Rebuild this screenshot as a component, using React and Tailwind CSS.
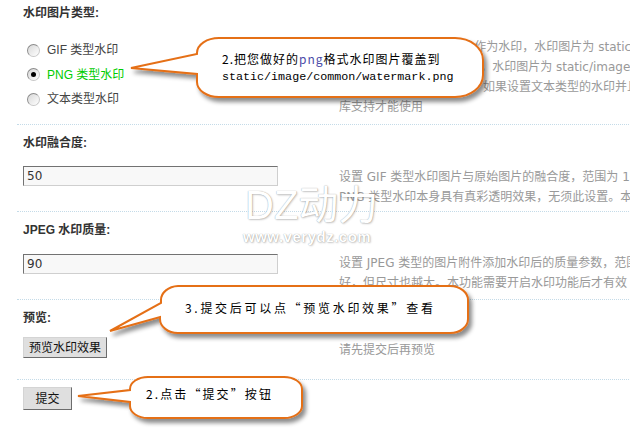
export default function App() {
  const radio = "w-[13px] h-[13px] rounded-full border border-[#8c8c8c] border-r-[#c8c8c8] border-b-[#c8c8c8] bg-gradient-to-br from-[#d8d8d8] to-white flex items-center justify-center";
  const input = "w-[255px] h-[20px] border border-t-[#727272] border-l-[#727272] border-b-[#cfcfcf] border-r-[#cfcfcf] bg-[#f8f8f8] pl-[3px] text-[12px] leading-[18px] text-[#333] [font-family:'DejaVu_Sans',sans-serif] outline-none";
  const btn = "h-[21px] bg-[#dfdfdf] border border-t-[#d4d4d4] border-l-[#d4d4d4] border-b-[#6c6c6c] border-r-[#6c6c6c] text-[12px] leading-none text-[#111]";
  const desc = "pl-[6px] text-[#999] leading-[20px] whitespace-nowrap [font-family:'DejaVu_Sans','Noto_Sans_CJK_SC',sans-serif]";
  return (
    <div className="relative w-[630px] h-[430px] overflow-hidden bg-white text-[12px] text-[#333] [font-family:'Liberation_Sans','Noto_Sans_CJK_SC',sans-serif]">
      <div className="ml-[17px] w-[900px]">
        {/* 水印图片类型 */}
        <div className="h-[125px] border-b border-dotted border-[#c4dbe8] pl-[6px] pt-[5px]">
          <div className="h-[16px] leading-[16px] font-bold">水印图片类型:</div>
          <div className="flex items-start">
            <div className="w-[310px] pt-[17px]">
              <div className="flex items-center h-[24.5px]">
                <span className={"ml-[4px] mr-[7px] " + radio}></span>
                <span className="text-[#444]">GIF 类型水印</span>
              </div>
              <div className="flex items-center h-[24.5px]">
                <span className={"ml-[4px] mr-[7px] " + radio}>
                  <span className="w-[5px] h-[5px] rounded-full bg-black"></span>
                </span>
                <span className="text-[#00cc00]">PNG 类型水印</span>
              </div>
              <div className="flex items-center h-[24.5px]">
                <span className={"ml-[4px] mr-[7px] " + radio}></span>
                <span className="text-[#444]">文本类型水印</span>
              </div>
            </div>
            <div className={desc + " pt-[16px] leading-[20.5px]"}>
              <div>如果设置 GIF 类型的图片作为水印，水印图片为 static/image/common/watermark.gif，</div>
              <div>如果设置 PNG 类型的图片，水印图片为 static/image/common/watermark.png，</div>
              <div>替换文件以实现不同效果。如果设置文本类型的水印并且使用 TrueType 字体，需要 FreeType</div>
              <div>库支持才能使用</div>
            </div>
          </div>
        </div>
        {/* 水印融合度 */}
        <div className="h-[87px] border-b border-dotted border-[#c4dbe8] pl-[6px] pt-[10px]">
          <div className="h-[16px] leading-[16px] font-bold">水印融合度:</div>
          <div className="flex items-start">
            <div className="w-[310px] pt-[15px]">
              <input className={input} defaultValue="50" />
            </div>
            <div className={desc + " pt-[16px]"}>
              <div>设置 GIF 类型水印图片与原始图片的融合度，范围为 1～100 的整数，数值越大水印图片透明度越低。</div>
              <div>PNG 类型水印本身具有真彩透明效果，无须此设置。本功能需要开启水印功能后才有效</div>
            </div>
          </div>
        </div>
        {/* JPEG 水印质量 */}
        <div className="h-[88px] border-b border-dotted border-[#c4dbe8] pl-[6px] pt-[10px]">
          <div className="h-[16px] leading-[16px] font-bold">JPEG 水印质量:</div>
          <div className="flex items-start">
            <div className="w-[310px] pt-[16px]">
              <input className={input} defaultValue="90" />
            </div>
            <div className={desc + " pt-[15px]"}>
              <div>设置 JPEG 类型的图片附件添加水印后的质量参数，范围为 0～100 的整数，数值越大结果图片效果越</div>
              <div>好，但尺寸也越大。本功能需要开启水印功能后才有效</div>
            </div>
          </div>
        </div>
        {/* 预览 */}
        <div className="h-[80px] border-b border-dotted border-[#c4dbe8] pl-[6px] pt-[10px]">
          <div className="h-[16px] leading-[16px] font-bold">预览:</div>
          <div className="flex items-start">
            <div className="w-[310px] pt-[11px]">
              <button className={btn + " w-[84px]"}>预览水印效果</button>
            </div>
            <div className={desc + " pt-[14px]"}>
              <div>请先提交后再预览</div>
            </div>
          </div>
        </div>
        {/* 提交 */}
        <div className="pl-[6px] pt-[7px]">
          <button className={btn + " w-[49px] h-[23px]"}>提交</button>
        </div>
      </div>

      {/* watermark */}
      <div className="absolute left-[245px] top-[185px] text-white [text-shadow:0_0_1px_rgba(0,0,0,0.4),1px_1px_2px_rgba(0,0,0,0.2)]">
        <div className="text-[40px] leading-none h-[44px]">DZ动力</div>
        <div className="-ml-[2px] text-[15px] leading-[16px] font-bold tracking-[0.5px] [font-family:'Liberation_Sans',sans-serif]">www.verydz.com</div>
      </div>

      {/* callouts */}
      <svg className="absolute left-0 top-0" width="630" height="430" viewBox="0 0 630 430">
        <defs>
          <filter id="sh" x="-20%" y="-30%" width="140%" height="170%">
            <feDropShadow dx="3" dy="4" stdDeviation="2" floodColor="#000" floodOpacity="0.45" />
          </filter>
        </defs>
        <g fill="#fff" stroke="#e56f17" strokeWidth="2" filter="url(#sh)">
          <path d="M219 38 H455 A28 22 0 0 1 483 60 V75 A28 22 0 0 1 455 97 H219 A22 15 0 0 1 197 82 V74 L131 68 L197 54 V53 A22 15 0 0 1 219 38 Z" />
          <path d="M178 286 H450 A18 14 0 0 1 468 300 V319 A18 14 0 0 1 450 333 H178 A18 14 0 0 1 160 319 V317 L110 331 L161 303 V300 A18 14 0 0 1 178 286 Z" />
          <path d="M148 377 H284 A18 12 0 0 1 302 389 V406 A18 12 0 0 1 284 418 H148 A18 12 0 0 1 130 406 V402 L78 396 L130 390 V389 A18 12 0 0 1 148 377 Z" />
        </g>
      </svg>
      <div className="absolute left-[222px] top-[48.5px] text-black">
        <div className="h-[19px] leading-[19px] tracking-[1px] [font-family:'Noto_Sans_CJK_SC',sans-serif]">2.把您做好的<span className="text-[#4b4ba8]">png</span>格式水印图片覆盖到</div>
        <div className="h-[19px] leading-[19px] text-[11.7px] [font-family:'Liberation_Mono',monospace]">static/image/common/watermark.png</div>
      </div>
      <div className="absolute left-[185px] top-[300px] h-[16px] leading-[16px] text-black tracking-[2.7px] whitespace-nowrap [font-family:'Noto_Sans_CJK_SC',sans-serif]">3.提交后可以点“预览水印效果”查看</div>
      <div className="absolute left-[146px] top-[386px] h-[16px] leading-[16px] text-black tracking-[2.1px] whitespace-nowrap [font-family:'Noto_Sans_CJK_SC',sans-serif]">2.点击“提交”按钮</div>
    </div>
  );
}
